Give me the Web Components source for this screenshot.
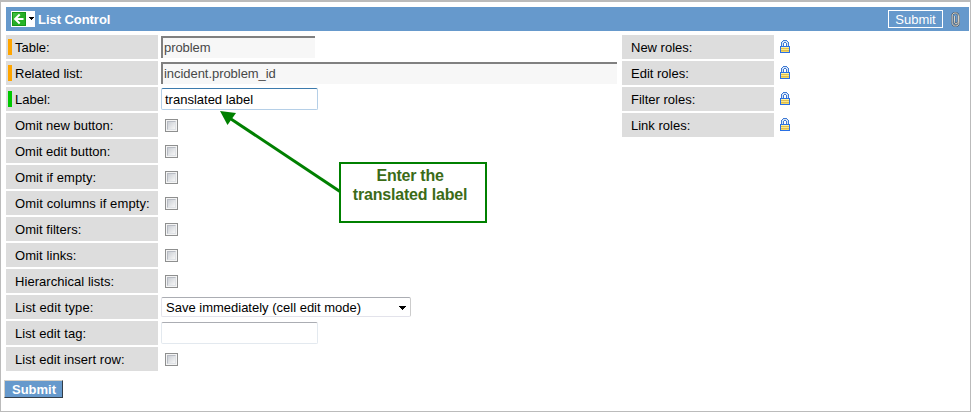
<!DOCTYPE html>
<html lang="en"><head><meta charset="utf-8"><title>List Control</title>
<style>
html,body{margin:0;height:100%;overflow:hidden}
body{background:#fff;font:13px/16px "Liberation Sans",Arial,sans-serif;color:#000}
</style></head><body>
<list-control></list-control>
<script>
class Base extends HTMLElement{
  constructor(){super();this.attachShadow({mode:'open'});}
  connectedCallback(){this.shadowRoot.innerHTML=this.render();}
  attr(n,d=''){return this.getAttribute(n)??d;}
}
customElements.define('form-row',class extends Base{
  render(){return `<style>
  :host{display:flex;height:24px;align-items:stretch}
  .label{box-sizing:border-box;width:152px;flex:none;background:#ddd;padding:0 0 0 2px;display:flex;align-items:center;white-space:nowrap}
  .mark{width:4px;height:16px;background:${this.attr('mark','transparent')};margin-right:3px}
  .value{flex:1;display:flex;align-items:center;padding-left:3px}
  span{letter-spacing:${this.attr('ls','0')}px;padding-top:2px}
  </style><div class="label"><div class="mark"></div><span>${this.attr('label')}</span></div><div class="value"><slot></slot></div>`;}
});
customElements.define('check-box',class extends Base{
  render(){return `<style>:host{display:block;box-sizing:border-box;width:13px;height:13px;border:1px solid #8e8f8f;background:#f4f4f4;padding:1px;margin:1px 0 0 4px}
  div{box-sizing:border-box;width:9px;height:9px;border:1px solid #b8bcc4;border-right-color:#dfe2e6;border-bottom-color:#dfe2e6;background:linear-gradient(135deg,#cbcfd5,#f6f6f6)}</style><div></div>`;}
});
customElements.define('text-field',class extends Base{
  render(){const k=this.attr('kind');return `<style>:host{display:flex;box-sizing:border-box;align-items:center;width:${this.attr('width')}px;height:22px;padding:0 3px;white-space:nowrap;background:#fff;border:1px solid #e3e9ef;border-top-color:#abadb3;border-radius:2px}
  :host([kind=readonly]){height:22px;background:#f7f7f7;color:#484848;border:0 solid #808080;border-width:2px 0 0 2px;padding:0 1px;border-radius:0}
  :host([kind=focus]){border-color:#b5cfe7;border-top-color:#3d7bad}
  span{letter-spacing:${this.attr('ls','0')}px;padding-top:${k=='focus'?2:0}px}</style><span><slot></slot></span>`;}
});
customElements.define('select-field',class extends Base{
  render(){return `<style>:host{display:flex;box-sizing:border-box;width:250px;height:20px;border:1px solid #e3e3eb;border-top-color:#abadb3;border-right-color:#ccc;border-radius:2px;align-items:center;justify-content:space-between;padding:1px 4px 0;white-space:nowrap}
  svg{display:block}</style><span><slot></slot></span><svg width="7" height="4" shape-rendering="crispEdges"><path d="M0 0h7v1H6v1H5v1H4v1H3V3H2V2H1V1H0z"/></svg>`;}
});
customElements.define('lock-icon',class extends Base{
  render(){return `<style>:host{display:block;margin:0 0 2px 3px}svg{display:block}</style><svg width="10" height="13" shape-rendering="crispEdges">
  <path fill="#3f7ad4" d="M3 0h4v1h1v1h1v4H1V2h1V1h1z"/><path fill="#d3e3f8" d="M3 1h4v1h1v4H7V3H6V2H4v1H3v3H2V2h1z"/><path fill="#3f7ad4" d="M3 3h1V2h2v1h1v3H3z"/><path fill="#fff" d="M4 3h2v3H4z"/>
  <path fill="#2a70e4" d="M0 6h10v7H0z"/><path fill="#f4d860" d="M1 7h8v5H1z"/><path fill="#fff3a0" d="M1 7h8v1H1z"/><path fill="#dfbd50" d="M1 8h8v1H1zM1 10h8v1H1z"/><path fill="#fbe98a" d="M1 9h8v1H1z"/></svg>`;}
});
customElements.define('title-bar',class extends Base{
  render(){return `<style>:host{display:flex;height:24px;background:#69c;color:#fff;align-items:center;box-sizing:border-box;padding:0 9px 0 5px}
  svg{display:block;flex:none}h1{font:bold 13px/16px "Liberation Sans",Arial,sans-serif;margin:1px auto 0 3px;letter-spacing:-.05px;white-space:nowrap}
  .submit{box-sizing:border-box;width:55px;height:18px;border:1px solid #fff;text-align:center;font-size:13px;line-height:17px;margin-right:8px}</style>
  <svg width="24" height="16"><defs><linearGradient id="g" x2="1" y2="1"><stop stop-color="#48c448"/><stop offset=".5" stop-color="#25ac25"/><stop offset="1" stop-color="#27b827"/></linearGradient></defs><path fill="#fff" d="M0 0h24v16H0z"/><rect x="1.500" y="1.500" width="13" height="13" fill="url(#g)" stroke="#159515"/><path d="M12.500 8H4.500M8.700 3.500 4.100 8l4.600 4.500" stroke="#fff" stroke-width="2" fill="none"/><path fill="#000" shape-rendering="crispEdges" d="M18 6h5v1h-1v1h-1v1h-1V8h-1V7h-1z"/></svg>
  <h1>List Control</h1><div class="submit">Submit</div>
  <svg width="9" height="15" fill="none"><path d="M7.900 3.500v6.700c0 2.400-1.200 3.800-3.300 3.800S1.200 12.500 1.200 10.300V4C1.200 2.100 2.400 1 4.200 1s3.100.9 3.100 2.800v6c0 1-.9 1.700-2.300 1.700s-1.500-.6-1.500-1.700V4" stroke="#4d5b6b" stroke-width="1.900"/><path d="M7.900 3.500v6.700c0 2.400-1.200 3.800-3.300 3.800S1.200 12.500 1.200 10.300V4C1.200 2.100 2.400 1 4.200 1s3.100.9 3.100 2.800v6c0 1-.9 1.700-2.300 1.700s-1.500-.6-1.500-1.700V4" stroke="#e4e0d4" stroke-width=".9"/></svg>`;}
});
customElements.define('call-out',class extends Base{
  render(){return `<style>:host{position:absolute;left:338px;top:160px;width:148px;height:61px;box-sizing:border-box;border:2px solid #008000;background:#fff;color:#3b6b17;font:bold 16px/19px "Liberation Sans",Arial,sans-serif;text-align:center;padding:2px 6px 0 0;white-space:nowrap}
  div{letter-spacing:-.18px}style+div{letter-spacing:-.25px}svg{position:absolute;left:-121px;top:-53px}</style><div>Enter the</div><div>translated label</div>
  <svg width="121" height="84"><path d="M11 8 120 80.500" stroke="#008000" stroke-width="3"/><path d="M0 0l16 2-8.500 12z" fill="#008000"/></svg>`;}
});
customElements.define('submit-button',class extends Base{
  render(){return `<style>:host{display:block;box-sizing:border-box;width:59px;height:18px;background:#69c;border:1px solid #d4d0c8;border-right-color:#333d48;border-bottom-color:#333d48;color:#fff;font:bold 13px/17px "Liberation Sans",Arial,sans-serif;text-align:center;padding-left:1px}</style><slot></slot>`;}
});
customElements.define('list-control',class extends Base{
  render(){const checks=(a)=>a.map(([t,l])=>`<form-row label="${t}" ls="${l||0}"><check-box></check-box></form-row>`).join('');
  return `<style>:host{display:block;position:relative;box-sizing:border-box;width:971px;height:412px;border:1px solid #bbb;border-top-width:2px;padding:5px 1px 0 5px}
  .cols{display:flex;justify-content:space-between;padding:4px 0 0}.a{width:611px}.b{width:347px}.a,.b{display:grid;gap:2px;align-content:start}
  submit-button{margin:9px 0 0 -2px}</style>
  <title-bar></title-bar><div class="cols"><div class="a">
  <form-row label="Table:" mark="#ffa500"><text-field kind="readonly" width="154" ls="-.08">problem</text-field></form-row>
  <form-row label="Related list:" mark="#ffa500"><text-field kind="readonly" width="456" ls="-.05">incident.problem_id</text-field></form-row>
  <form-row label="Label:" mark="#00c800"><text-field kind="focus" width="157">translated label</text-field></form-row>
  ${checks([['Omit new button:'],['Omit edit button:'],['Omit if empty:',.07],['Omit columns if empty:',.12],['Omit filters:',.05],['Omit links:',.08],['Hierarchical lists:',.05]])}
  <form-row label="List edit type:" ls=".13"><select-field>Save immediately (cell edit mode)</select-field></form-row>
  <form-row label="List edit tag:" ls=".08"><text-field width="157"></text-field></form-row>
  ${checks([['List edit insert row:',.06]])}
  </div><div class="b">${['New','Edit','Filter','Link'].map(t=>`<form-row label="${t} roles:"><lock-icon></lock-icon></form-row>`).join('')}</div></div>
  <submit-button>Submit</submit-button><call-out></call-out>`;}
});
</script></body></html>
